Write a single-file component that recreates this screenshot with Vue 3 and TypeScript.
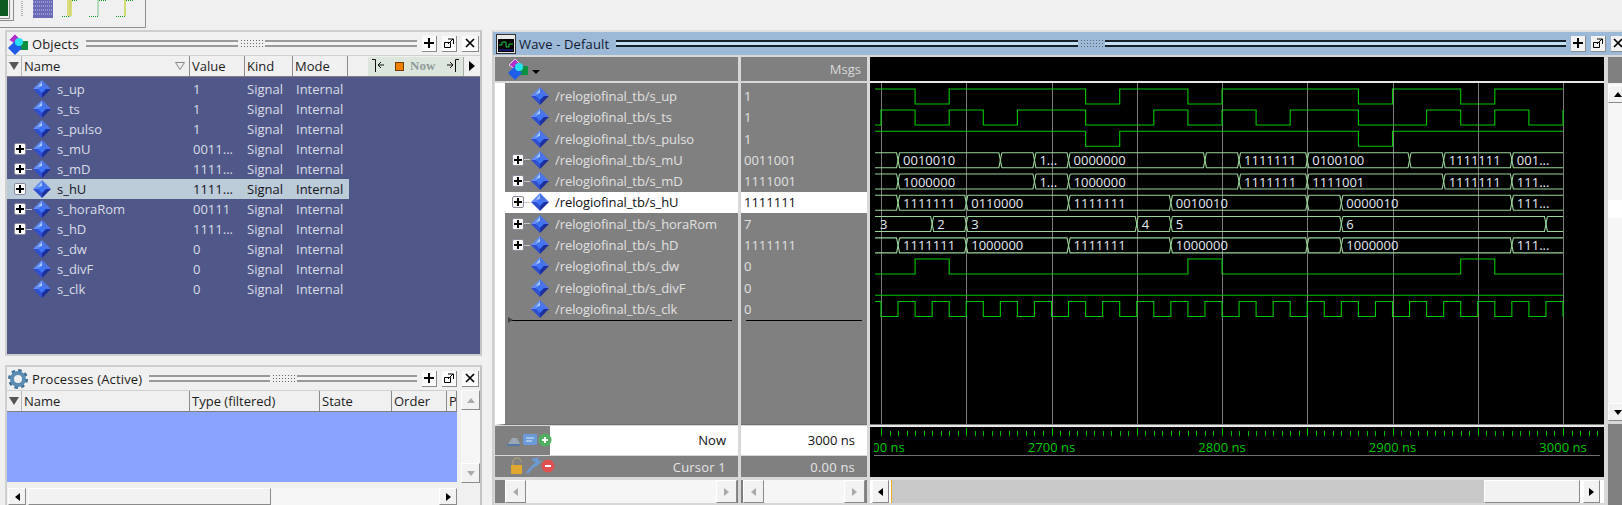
<script setup lang="ts">
type Row = { name: string; value: string; short: string; bus?: boolean }
type Seg = [number, number, string]

const rows: Row[] = [
  { name: 's_up', value: '1', short: '1' },
  { name: 's_ts', value: '1', short: '1' },
  { name: 's_pulso', value: '1', short: '1' },
  { name: 's_mU', value: '0011001', short: '0011...', bus: true },
  { name: 's_mD', value: '1111001', short: '1111...', bus: true },
  { name: 's_hU', value: '1111111', short: '1111...', bus: true },
  { name: 's_horaRom', value: '7', short: '00111', bus: true },
  { name: 's_hD', value: '1111111', short: '1111...', bus: true },
  { name: 's_dw', value: '0', short: '0' },
  { name: 's_divF', value: '0', short: '0' },
  { name: 's_clk', value: '0', short: '0' },
]

// clock half periods are the time base for every edge
const X = (k: number) => 881 + 17.05 * k
const START = -0.35
const END = 40

function digital(mid: number, startHigh: boolean, edges: number[]) {
  const hi = mid - 7.5
  const lo = mid + 7.5
  let high = startHigh
  let d = `M${X(START)} ${high ? hi : lo}`
  for (const e of edges) {
    d += ` L${X(e)} ${high ? hi : lo}`
    high = !high
    d += ` L${X(e)} ${high ? hi : lo}`
  }
  return d + ` L${X(END)} ${high ? hi : lo}`
}

const clkEdges = Array.from({ length: 41 }, (_, i) => i)
const wires = [
  digital(96.5, true, [2, 4, 12, 14, 18, 20, 28, 30, 34, 36]),
  digital(117.5, false, [0, 2, 4, 6, 8, 12, 16, 18, 20, 22, 24, 28, 32, 34, 36, 38, 40]),
  digital(138.8, true, [12, 14, 28, 30]),
  digital(266.5, false, [2, 4, 18, 20, 34, 36]),
  digital(287.8, false, []),
  digital(309, true, clkEdges),
]

function seg(mid: number, a: number, b: number) {
  const top = mid - 7.5
  const bot = mid + 7.5
  const x1 = X(a)
  const x2 = X(b)
  const left = a <= START ? `M${x1} ${top}` : `M${x1 + 1.5} ${top}`
  const right = b >= END ? `L${x2} ${top} M${x2} ${bot}` : `L${x2 - 1.5} ${top} L${x2} ${mid} L${x2 - 1.5} ${bot}`
  const back = a <= START ? `L${x1} ${bot}` : `L${x1 + 1.5} ${bot} L${x1} ${mid} L${x1 + 1.5} ${top}`
  return `${left} ${right} ${back}`
}

const busData: { mid: number; segs: Seg[] }[] = [
  { mid: 160.2, segs: [[START, 1, ''], [1, 7, '0010010'], [7, 9, ''], [9, 11, '1...'], [11, 19, '0000000'], [19, 21, ''], [21, 25, '1111111'], [25, 31, '0100100'], [31, 33, ''], [33, 37, '1111111'], [37, END, '001...']] },
  { mid: 181.5, segs: [[START, 1, ''], [1, 9, '1000000'], [9, 11, '1...'], [11, 21, '1000000'], [21, 25, '1111111'], [25, 33, '1111001'], [33, 37, '1111111'], [37, END, '111...']] },
  { mid: 202.8, segs: [[START, 1, ''], [1, 5, '1111111'], [5, 11, '0110000'], [11, 17, '1111111'], [17, 25, '0010010'], [25, 27, ''], [27, 37, '0000010'], [37, END, '111...']] },
  { mid: 224, segs: [[START, 3, '3'], [3, 5, '2'], [5, 15, '3'], [15, 17, '4'], [17, 27, '5'], [27, 39, '6'], [39, END, '']] },
  { mid: 245.4, segs: [[START, 1, ''], [1, 5, '1111111'], [5, 11, '1000000'], [11, 17, '1111111'], [17, 25, '1000000'], [25, 27, ''], [27, 37, '1000000'], [37, END, '111...']] },
]

const gridXs = Array.from({ length: 9 }, (_, i) => Math.round(X(i * 5)) + 0.5)
const ticks = Array.from({ length: 85 }, (_, i) => ({
  x: Math.round(881 + 8.525 * i) + 0.5,
  major: i % 10 === 0,
}))
const axisLabels = [
  { t: '2600 ns', k: 0 },
  { t: '2700 ns', k: 10 },
  { t: '2800 ns', k: 20 },
  { t: '2900 ns', k: 30 },
  { t: '3000 ns', k: 40 },
]
const procCols = [
  { t: 'Type (filtered)', w: 130 },
  { t: 'State', w: 72 },
  { t: 'Order', w: 55 },
  { t: 'P', w: 10 },
]
</script>

<template>
  <div class="app">
    <svg class="defs" width="0" height="0">
      <defs>
        <symbol id="dia" viewBox="0 0 20 20">
          <path d="M10 1 L19 10 L10 10Z" fill="#4a74e8" />
          <path d="M10 1 L1 10 L10 10Z" fill="#5f8cf6" />
          <path d="M1 10 L10 19 L10 10Z" fill="#2e4fd0" />
          <path d="M19 10 L10 19 L10 10Z" fill="#1c2f9e" />
          <path d="M10 6 L14 10 L10 14 L6 10Z" fill="#3f74f4" />
          <path d="M10 3 L6 8 L10 7Z" fill="#a9c6ff" />
        </symbol>
        <symbol id="stack" viewBox="0 0 22 22">
          <path d="M8 1 L14 7 L8 11 L2 7Z" fill="#b030c8" stroke="#e8d0f0" />
          <rect x="12" y="8" width="9" height="9" fill="#0f9040" />
          <path d="M8 8 L15 15 L8 22 L1 15Z" fill="#1f5ce8" />
          <circle cx="12" cy="9" r="4" fill="#28e0f0" />
        </symbol>
      </defs>
    </svg>

    <div class="toolbar">
      <svg width="146" height="28" viewBox="0 0 146 28">
        <rect x="0" y="0" width="145" height="27" fill="#f0f0f0" />
        <path d="M0 27.5 H145.5 V0" fill="none" stroke="#909090" />
        <rect x="0" y="0" width="8" height="16" fill="#0c5a22" />
        <path d="M9.5 0 V18.5 H0 M13.5 0 V20.5 H0" fill="none" stroke="#8a8a8a" />
        <path d="M22 1 V17" stroke="#777" stroke-dasharray="1 1" />
        <rect x="33" y="0" width="20" height="18" fill="#6a6ab8" />
        <path d="M33 2 H53 M33 6 H53 M33 10 H53 M33 14 H53" stroke="#c8c8e8" stroke-dasharray="1 1" />
        <path d="M62 16.5 H70 V0.5 H78" fill="none" stroke="#0a9a2a" stroke-dasharray="1 1" />
        <rect x="67" y="0" width="5" height="16" fill="#d8d860" opacity=".8" />
        <path d="M89 16.5 H98 V0.5 H107" fill="none" stroke="#0a9a2a" stroke-dasharray="1 1" />
        <path d="M116 16.5 H125 V0.5 H133" fill="none" stroke="#0a9a2a" stroke-dasharray="1 1" />
        <path d="M125 0 V16" stroke="#e8e020" />
      </svg>
    </div>

    <div class="panes">
      <div class="left">
        <section class="panel objects">
          <div class="title">
            <svg class="t-icon" width="22" height="22"><use href="#stack" /></svg>
            <span class="t-text">Objects</span>
            <div class="grip">
              <div class="gline"></div>
              <div class="gdots"></div>
              <div class="gline"></div>
            </div>
            <div class="wbtns">
              <button class="wbtn">
                <svg width="12" height="12"><path d="M6 1 V11 M1 6 H11" stroke="#000" stroke-width="2" /></svg>
              </button>
              <button class="wbtn">
                <svg width="12" height="12"><path d="M1.5 5.5 H7.5 V10.5 H1.5Z M5 2 H10.5 V7 M10 2 L5 7" fill="none" stroke="#000" /></svg>
              </button>
              <button class="wbtn">
                <svg width="12" height="12"><path d="M2 2 L10 10 M10 2 L2 10" stroke="#000" stroke-width="1.7" /></svg>
              </button>
            </div>
          </div>
          <div class="hdr obj-grid">
            <div class="hc first">
              <span class="caret-box"><span class="caret"></span></span>
              <span>Name</span>
              <svg class="funnel" width="10" height="8"><path d="M0.5 0.5 H9.5 L5 7.5Z" fill="#eee" stroke="#888" /></svg>
            </div>
            <div class="hc">Value</div>
            <div class="hc">Kind</div>
            <div class="hc">Mode</div>
            <div class="hc-tools">
              <div class="now-tools">
                <svg width="18" height="18"><path d="M3 2.5 H6.5 V15 M9 8 L15 8 M12 5 L9 8 L12 11" fill="none" stroke="#111" /></svg>
                <span class="orange"></span>
                <span class="now">Now</span>
                <svg width="18" height="18"><path d="M15 2.5 H11.5 V15 M3 8 L9 8 M6 5 L9 8 L6 11" fill="none" stroke="#111" /></svg>
              </div>
              <span class="play"></span>
            </div>
          </div>
          <div class="obj-list">
            <div
              v-for="r in rows"
              :key="r.name"
              class="obj-grid obj-row"
              :class="{ sel: r.name === 's_hU' }"
            >
              <div class="obj-name">
                <span class="plus-slot">
                  <template v-if="r.bus">
                    <span class="plus"></span>
                    <span class="stub"></span>
                  </template>
                </span>
                <svg width="20" height="20"><use href="#dia" /></svg>
                <span class="nm">{{ r.name }}</span>
              </div>
              <div class="c-val">{{ r.short }}</div>
              <div class="c-kind">Signal</div>
              <div class="c-mode">Internal</div>
            </div>
          </div>
        </section>

        <section class="panel procs">
          <div class="title">
            <svg class="t-icon" width="22" height="22" viewBox="0 0 22 22">
              <circle cx="11" cy="11" r="8" fill="none" stroke="#3d6d94" stroke-width="4" stroke-dasharray="3.2 3.08" />
              <circle cx="11" cy="11" r="6" fill="none" stroke="#5a8cb4" stroke-width="4" />
            </svg>
            <span class="t-text">Processes (Active)</span>
            <div class="grip">
              <div class="gline"></div>
              <div class="gdots"></div>
              <div class="gline"></div>
            </div>
            <div class="wbtns">
              <button class="wbtn">
                <svg width="12" height="12"><path d="M6 1 V11 M1 6 H11" stroke="#000" stroke-width="2" /></svg>
              </button>
              <button class="wbtn">
                <svg width="12" height="12"><path d="M1.5 5.5 H7.5 V10.5 H1.5Z M5 2 H10.5 V7 M10 2 L5 7" fill="none" stroke="#000" /></svg>
              </button>
              <button class="wbtn">
                <svg width="12" height="12"><path d="M2 2 L10 10 M10 2 L2 10" stroke="#000" stroke-width="1.7" /></svg>
              </button>
            </div>
          </div>
          <div class="proc-body">
            <div class="proc-main">
              <div class="hdr proc-hdr">
                <div class="hc first proc-name">
                  <span class="caret-box"><span class="caret"></span></span>
                  <span>Name</span>
                </div>
                <div v-for="c in procCols" :key="c.t" class="hc" :style="{ width: c.w + 'px' }">{{ c.t }}</div>
              </div>
              <div class="proc-blue"></div>
              <div class="hscroll proc-h">
                <button class="sb"><span class="arr l dark"></span></button>
                <div class="sb thumb"></div>
                <div class="track"></div>
                <button class="sb"><span class="arr r dark"></span></button>
              </div>
            </div>
            <div class="vscroll proc-v">
              <button class="sb v"><span class="arr u"></span></button>
              <div class="track"></div>
              <button class="sb v"><span class="arr d"></span></button>
            </div>
          </div>
        </section>
      </div>

      <section class="wave">
        <div class="title wave-title">
          <svg class="w-icon" width="20" height="20" viewBox="0 0 20 20">
            <rect x="0.5" y="0.5" width="19" height="19" fill="#e8e8e8" stroke="#333" />
            <rect x="2" y="5" width="16" height="13" fill="#000" />
            <path d="M3 11 H6 V8 H10 V13 H13 V10 H17" fill="none" stroke="#20d040" />
            <path d="M3 16 H17" stroke="#3030d0" />
          </svg>
          <span class="t-text">Wave - Default</span>
          <div class="grip wgrip">
            <div class="gline"></div>
            <div class="gdots"></div>
            <div class="gline"></div>
          </div>
          <div class="wbtns">
            <button class="wbtn">
              <svg width="12" height="12"><path d="M6 1 V11 M1 6 H11" stroke="#000" stroke-width="2" /></svg>
            </button>
            <button class="wbtn">
              <svg width="12" height="12"><path d="M1.5 5.5 H7.5 V10.5 H1.5Z M5 2 H10.5 V7 M10 2 L5 7" fill="none" stroke="#000" /></svg>
            </button>
            <button class="wbtn">
              <svg width="12" height="12"><path d="M2 2 L10 10 M10 2 L2 10" stroke="#000" stroke-width="1.7" /></svg>
            </button>
          </div>
        </div>

        <div class="wave-body">
          <div class="col names">
            <div class="w-head">
              <svg width="22" height="22"><use href="#stack" /></svg>
              <span class="tri"></span>
            </div>
            <div class="w-list names-list">
              <div v-for="r in rows" :key="r.name" class="w-row" :class="{ on: r.name === 's_hU' }">
                <span class="plus-slot wave-slot">
                  <template v-if="r.bus">
                    <span class="plus"></span>
                    <span class="stub"></span>
                  </template>
                </span>
                <svg width="20" height="20"><use href="#dia" /></svg>
                <span class="path">/relogiofinal_tb/{{ r.name }}</span>
              </div>
              <div class="divider name-div"></div>
            </div>
            <div class="now-row">
              <div class="now-icons">
                <svg width="48" height="18" viewBox="0 0 48 18">
                  <path d="M2 13 L6 7 H11 L14 13Z" fill="#9aa6b4" />
                  <path d="M1 14 H14" stroke="#5578a8" stroke-width="2" />
                  <rect x="17" y="3" width="14" height="11" rx="1" fill="#6a9ad8" />
                  <path d="M20 7 H28 M20 10 H26" stroke="#dfeaf8" />
                  <circle cx="39" cy="9" r="6.5" fill="#50b060" />
                  <path d="M39 6 V12 M36 9 H42" stroke="#fff" stroke-width="2" />
                </svg>
              </div>
              <div class="now-cell">Now</div>
            </div>
            <div class="cur-row">
              <div class="cur-icons">
                <svg width="48" height="18" viewBox="0 0 48 18">
                  <path d="M3 8 V5 A4 4 0 0 1 11 5" fill="none" stroke="#a89878" stroke-width="1.5" />
                  <rect x="1" y="8" width="11" height="9" fill="#e0a830" />
                  <path d="M17 16 L25 7 M22 3 L27 2 L26 5 L29 5 L25 9" fill="none" stroke="#6a9ad8" stroke-width="2.4" />
                  <circle cx="38" cy="9" r="6.5" fill="#e05050" />
                  <path d="M35 9 H41" stroke="#fff" stroke-width="2" />
                </svg>
              </div>
              <span>Cursor 1</span>
            </div>
            <div class="hscroll w-h names-h">
              <button class="sb"><span class="arr l"></span></button>
              <div class="track"></div>
              <button class="sb"><span class="arr r"></span></button>
            </div>
          </div>

          <div class="col vals">
            <div class="w-head msgs">Msgs</div>
            <div class="w-list">
              <div v-for="r in rows" :key="r.name" class="w-row val" :class="{ on: r.name === 's_hU' }">{{ r.value }}</div>
              <div class="divider val-div"></div>
            </div>
            <div class="now-row now-val">3000 ns</div>
            <div class="cur-row cur-val">0.00 ns</div>
            <div class="hscroll w-h vals-h">
              <button class="sb"><span class="arr l"></span></button>
              <div class="track"></div>
              <button class="sb"><span class="arr r"></span></button>
            </div>
          </div>

          <div class="col wavecol">
            <svg class="plot" width="734" height="420" viewBox="870 57 734 420">
              <defs>
                <clipPath id="axisClip"><rect x="874" y="437" width="730" height="30" /></clipPath>
              </defs>
              <rect x="870" y="57" width="734" height="420" fill="#000" />
              <rect x="870" y="81" width="734" height="2" fill="#e8e8e8" />
              <path v-for="x in gridXs" :key="x" :d="`M${x} 83 V424`" class="grid" />
              <path d="M870 424.5 H1604" class="grid" />
              <rect x="870" y="425" width="734" height="2" fill="#e8e8e8" />
              <path v-for="(w, i) in wires" :key="i" :d="w" class="wire" />
              <g v-for="b in busData" :key="b.mid">
                <g v-for="s in b.segs" :key="s[0]">
                  <path :d="seg(b.mid, s[0], s[1])" class="bus" />
                  <text
                    v-if="s[2]"
                    class="bus-t"
                    :x="s[0] <= START ? 880 : X(s[0]) + 5"
                    :y="b.mid + 5"
                  >{{ s[2] }}</text>
                </g>
              </g>
              <path
                v-for="t in ticks"
                :key="t.x"
                :d="`M${t.x} ${t.major ? 428 : 431} V436`"
                class="tick"
              />
              <g clip-path="url(#axisClip)">
                <text
                  v-for="a in axisLabels"
                  :key="a.t"
                  class="axis-t"
                  :x="X(a.k)"
                  y="452"
                  text-anchor="middle"
                >{{ a.t }}</text>
              </g>
              <path d="M874 455.5 H1600" stroke="#707070" />
            </svg>
            <div class="hscroll wave-h">
              <button class="sb"><span class="arr l dark"></span></button>
              <i class="mark"></i>
              <div class="gray-track"></div>
              <div class="sb wave-thumb"></div>
              <button class="sb"><span class="arr r dark"></span></button>
            </div>
          </div>

          <div class="col rside">
            <div class="r-top"></div>
            <div class="vscroll r-v">
              <button class="sb v"><span class="arr u dark"></span></button>
              <div class="track r-track">
                <div class="r-mark"></div>
              </div>
              <button class="sb v"><span class="arr d dark"></span></button>
            </div>
            <div class="r-bot"></div>
          </div>
        </div>
      </section>
    </div>
  </div>
</template>

<style>
html,
body {
  margin: 0;
  background: #f0f0f0;
}
</style>

<style scoped>
.app {
  width: 1622px;
  height: 505px;
  overflow: hidden;
  background: #f0f0f0;
  font-family: "Open Sans", "Noto Sans", sans-serif;
  font-size: 13px;
  color: #1c1c1c;
}
.defs {
  display: block;
  height: 0;
}
.toolbar {
  height: 30px;
}
.toolbar svg {
  display: block;
}
.panes {
  display: flex;
  height: 475px;
  padding-left: 5px;
  gap: 10px;
}

/* docked panels on the left */
.left {
  width: 477px;
  display: flex;
  flex-direction: column;
  gap: 9px;
}
.panel {
  border: 2px solid #cfcfcf;
  box-sizing: border-box;
  background: #f0f0f0;
  border-right-color: #c4c4c4;
}
.objects {
  height: 326px;
}
.procs {
  height: 140px;
  border-bottom: 0;
}
.title {
  height: 23px;
  display: flex;
  align-items: center;
}
.t-icon {
  margin-left: 0;
  flex: none;
}
.t-text {
  margin-left: 3px;
  white-space: nowrap;
  line-height: 20px;
  letter-spacing: 0.15px;
}
.grip {
  flex: 1;
  display: flex;
  align-items: center;
  margin: 0 5px 0 7px;
}
.gline {
  flex: 1;
  height: 3px;
  border-top: 2px solid #9a9a9a;
  border-bottom: 2px solid #9a9a9a;
  background: #f4f4f4;
}
.gdots {
  width: 23px;
  height: 9px;
  margin: 0 2px;
  background-image: radial-gradient(circle, #666 0.7px, transparent 0.8px);
  background-size: 3px 3px;
}
.wbtns {
  display: flex;
  gap: 5px;
  padding-right: 1px;
}
.wbtn {
  width: 15px;
  height: 16px;
  padding: 0;
  display: flex;
  align-items: center;
  justify-content: center;
  background: #fbfbfb;
  border: 0;
  border-right: 1px solid #8a8a8a;
  border-bottom: 1px solid #8a8a8a;
}
.objects .wbtn:last-child,
.procs .wbtn:last-child {
  width: 17px;
}

.hdr {
  height: 20px;
  border-top: 1px solid #d0d0d0;
  border-bottom: 1px solid #808080;
  box-sizing: content-box;
  background: #f0f0f0;
}
.obj-grid {
  display: grid;
  grid-template-columns: 183px 55px 48px 55px 1fr;
}
.hc {
  display: flex;
  align-items: center;
  padding-left: 2px;
  border-right: 1px solid #8a8a8a;
  box-sizing: border-box;
  white-space: nowrap;
  overflow: hidden;
}
.hc.first {
  padding-left: 0;
  position: relative;
}
.caret-box {
  width: 14px;
  height: 100%;
  margin-right: 2px;
  flex: none;
  border-right: 1px solid #b8b8b8;
  display: flex;
  align-items: center;
  justify-content: center;
}
.caret {
  width: 0;
  height: 0;
  border-left: 5px solid transparent;
  border-right: 5px solid transparent;
  border-top: 8px solid #555;
}
.funnel {
  position: absolute;
  right: 4px;
  top: 6px;
}
.hc-tools {
  display: flex;
  align-items: center;
  padding-left: 20px;
}
.now-tools {
  width: 96px;
  height: 19px;
  display: flex;
  align-items: center;
  background: #dde6dd;
  border-right: 1px solid #aaa;
  padding: 0 1px;
  box-sizing: border-box;
}
.orange {
  width: 9px;
  height: 9px;
  margin-left: 8px;
  box-sizing: border-box;
  background: #f08000;
  border: 1px solid #704000;
}
.now {
  color: #8f9a9a;
  font-family: "Liberation Serif", serif;
  font-weight: 700;
  font-size: 13px;
  margin-left: 6px;
  margin-right: auto;
}
.play {
  margin-left: 5px;
  width: 0;
  height: 0;
  border-top: 5px solid transparent;
  border-bottom: 5px solid transparent;
  border-left: 6px solid #000;
}
.obj-list {
  height: 277px;
  padding-top: 2px;
  box-sizing: border-box;
  background: #50588a;
  color: #dadde6;
}
.obj-row {
  height: 20px;
  line-height: 20px;
  grid-template-columns: 186px 54px 49px 52px;
}
.obj-row.sel {
  background: #bccbd8;
  color: #14141c;
  width: 342px;
}
.obj-name {
  display: flex;
  align-items: center;
}
.plus-slot {
  width: 25px;
  height: 20px;
  flex: none;
  display: flex;
  align-items: center;
  padding-left: 7px;
  box-sizing: border-box;
}
.wave-slot {
  width: 25px;
}
.plus {
  width: 12px;
  height: 12px;
  flex: none;
  box-sizing: border-box;
  border: 1px solid #8a8a9a;
  border-radius: 2px;
  background:
    linear-gradient(#000, #000) center / 8px 2px no-repeat,
    linear-gradient(#000, #000) center / 2px 8px no-repeat,
    #f8f8f8;
}
.stub {
  width: 6px;
  height: 1px;
  background: #c8c8d0;
}
.nm {
  margin-left: 5px;
}
.c-val,
.c-kind,
.c-mode {
  white-space: nowrap;
}

.proc-body {
  display: flex;
}
.proc-main {
  width: 450px;
}
.proc-hdr {
  display: flex;
  height: 20px;
}
.proc-name {
  width: 183px;
}
.proc-blue {
  height: 70px;
  background: #8aa3ff;
}
.proc-h {
  margin-top: 6px;
  height: 17px;
  padding-left: 1px;
}
.proc-v {
  width: 19px;
  margin-left: 4px;
  height: 93px;
}

.hscroll {
  display: flex;
  align-items: stretch;
}
.vscroll {
  display: flex;
  flex-direction: column;
}
.sb {
  width: 18px;
  flex: none;
  padding: 0;
  display: flex;
  align-items: center;
  justify-content: center;
  background: #f2f2f2;
  border: 0;
  border-top: 1px solid #fff;
  border-left: 1px solid #fff;
  border-right: 1px solid #8a8a8a;
  border-bottom: 1px solid #8a8a8a;
  box-sizing: border-box;
}
.sb.v {
  width: 100%;
  height: 20px;
}
.thumb {
  width: 243px;
  margin-left: 2px;
}
.track {
  flex: 1;
  background: #f6f6f6;
}
.arr {
  width: 0;
  height: 0;
  border: 4px solid transparent;
}
.arr.l {
  border-left: 0;
  border-right: 5px solid #aaa;
}
.arr.r {
  border-right: 0;
  border-left: 5px solid #aaa;
}
.arr.u {
  border-top: 0;
  border-bottom: 5px solid #aaa;
}
.arr.d {
  border-bottom: 0;
  border-top: 5px solid #aaa;
}
.arr.l.dark {
  border-right-color: #000;
}
.arr.r.dark {
  border-left-color: #000;
}
.arr.u.dark {
  border-bottom-color: #000;
}
.arr.d.dark {
  border-top-color: #000;
}

/* wave window */
.wave {
  width: 1134px;
  flex: none;
  box-sizing: border-box;
  border-left: 2px solid #cfcfcf;
  border-top: 2px solid #e0e0e0;
  background: #c8c8c8;
}
.wave-title {
  background: #9cb9d8;
  height: 23px;
  padding-left: 4px;
  border-bottom: 2px solid #d8d8d8;
  box-sizing: content-box;
  margin-left: -1px;
}
.w-icon {
  flex: none;
  margin-left: -1px;
}
.wave-title .t-text {
  margin-left: 3px;
  color: #10182c;
}
.wgrip {
  margin: 0 5px 0 7px;
}
.wgrip .gline {
  height: 3px;
  border-top: 2px solid #18202c;
  border-bottom: 2px solid #18202c;
  background: #c4e0f4;
}
.wave-title .wbtns {
  gap: 5px;
  padding-right: 0;
}
.wave-title .wbtn {
  background: #f2f2f2;
  flex: none;
}
.wave-body {
  display: flex;
  height: 448px;
  padding-left: 1px;
  background: #d8d8d8;
}
.col {
  display: flex;
  flex-direction: column;
  flex: none;
}
.names {
  width: 243px;
  margin-right: 3px;
}
.vals {
  width: 126px;
  margin-right: 3px;
}
.wavecol {
  width: 734px;
  margin-right: 4px;
}
.rside {
  width: 20px;
}
.w-head {
  height: 24px;
  margin-bottom: 2px;
  background: #808080;
  display: flex;
  align-items: center;
  color: #d8d8d8;
}
.names .w-head {
  padding-left: 12px;
}
.tri {
  margin-left: 3px;
  margin-top: 6px;
  width: 0;
  height: 0;
  border-left: 4px solid transparent;
  border-right: 4px solid transparent;
  border-top: 4px solid #000;
}
.msgs {
  justify-content: flex-end;
  padding-right: 6px;
}
.w-list {
  height: 342px;
  box-sizing: border-box;
  background: #808080;
  padding-top: 2.3px;
  color: #e0e0e0;
  border-bottom: 1px solid #707070;
}
.names-list {
  border-left: 10px solid #fff;
}
.w-row {
  height: 21.3px;
  display: flex;
  align-items: center;
  white-space: nowrap;
}
.w-row.on {
  background: #fff;
  color: #101010;
}
.path {
  margin-left: 5px;
  letter-spacing: -0.08px;
}
.val {
  padding-left: 3px;
}
.divider {
  height: 1px;
  background: #000;
  position: relative;
}
.name-div {
  margin: 0 6px 0 3px;
}
.name-div::before {
  content: "";
  position: absolute;
  left: 0;
  top: -3px;
  width: 0;
  height: 0;
  border-top: 3.5px solid transparent;
  border-bottom: 3.5px solid transparent;
  border-left: 5px solid #444;
}
.val-div {
  margin: 0 5px;
}
.now-row {
  height: 29px;
  margin-top: 1px;
  display: flex;
  background: #fff;
  color: #111;
}
.now-icons {
  width: 55px;
  background: #808080;
  padding: 5px 0 0 11px;
  box-sizing: border-box;
  flex: none;
}
.now-cell {
  flex: 1;
  text-align: right;
  padding-right: 12px;
  line-height: 29px;
}
.now-val {
  justify-content: flex-end;
  padding-right: 12px;
  line-height: 29px;
}
.cur-row {
  height: 21px;
  margin-top: 1px;
  display: flex;
  align-items: center;
  justify-content: flex-end;
  padding-right: 12px;
  background: #808080;
  color: #e4e4e4;
  letter-spacing: 0.2px;
  position: relative;
}
.cur-icons {
  margin-right: auto;
  padding: 2px 0 0 15px;
}
.w-h {
  height: 23px;
  margin-top: 3px;
  background: #808080;
}
.names-h {
  padding: 0 1px 0 10px;
}
.vals-h {
  padding: 0 2px;
}
.w-h .sb {
  width: 21px;
}
.plot {
  display: block;
}
.grid {
  stroke: #7c7c7c;
  fill: none;
}
.wire {
  fill: none;
  stroke: #00c800;
  stroke-width: 1.1;
}
.bus {
  fill: none;
  stroke: #9ad49a;
  stroke-width: 1.1;
}
.bus-t {
  fill: #e4eaf2;
  font-size: 13px;
}
.tick {
  stroke: #00c000;
}
.axis-t {
  fill: #00c800;
  font-size: 13px;
}
.wave-h {
  height: 23px;
  margin-top: 3px;
  padding: 0 4px 0 2px;
  background: #fff;
}
.wave-h .sb {
  width: 17px;
}
.mark {
  width: 1px;
  margin-left: 2px;
  background: #e8b020;
}
.gray-track {
  flex: 1;
  background: #c8c8c8;
}
.wave-h .wave-thumb {
  width: 96px;
}
.wave-h .sb:last-child {
  margin-left: 3px;
}
.r-top {
  height: 26px;
  background: #808080;
}
.r-v {
  height: 338px;
  padding-top: 2px;
  box-sizing: border-box;
  background: #f2f2f2;
}
.r-v .sb.v {
  height: 18px;
  flex: none;
}
.r-track {
  padding-top: 97px;
}
.r-mark {
  height: 18px;
  background: #fff;
}
.r-bot {
  flex: 1;
  margin-top: 3px;
  background: #808080;
}
</style>
